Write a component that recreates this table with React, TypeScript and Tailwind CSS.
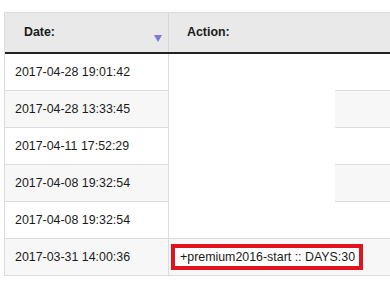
const rows = [
  { date: "2017-04-28 19:01:42", action: "" },
  { date: "2017-04-28 13:33:45", action: "" },
  { date: "2017-04-11 17:52:29", action: "" },
  { date: "2017-04-08 19:32:54", action: "" },
  { date: "2017-04-08 19:32:54", action: "" },
  { date: "2017-03-31 14:00:36", action: "+premium2016-start :: DAYS:30" },
];

export default function App() {
  return (
    <div className="relative h-[281px] w-[390px] overflow-hidden bg-white pt-[12px] pl-[4px] font-['Liberation_Sans',Arial,sans-serif] text-[12.4px] text-[#1a1a1a]">
      <div className="w-[420px] border-l border-t border-[#dcdcdc]">
        <div className="flex h-[41px] border-b-2 border-[#222] bg-[#e9e9e9] font-bold">
          <div className="relative flex w-[164px] shrink-0 items-center border-r border-[#d6d6d6] pl-[19px]">
            Date:
            <span className="absolute right-[6px] top-[22px] h-0 w-0 border-x-[4px] border-t-[7px] border-x-transparent border-t-[#7b7bd8]" />
          </div>
          <div className="flex flex-1 items-center pl-[18px]">Action:</div>
        </div>
        {rows.map((r, i) => (
          <div
            key={i}
            className={`flex h-[37px] border-b border-[#dcdcdc] ${i % 2 === 1 ? "bg-[#f7f7f7]" : "bg-white"}`}
          >
            <div className="flex w-[164px] shrink-0 items-center border-r border-[#dcdcdc] pl-[10px]">
              {r.date}
            </div>
            <div className="flex flex-1 items-center pl-[2px]">
              {r.action && (
                <span className="flex h-[26px] w-[192px] items-center border-[4px] border-[#e0141e] bg-white pl-[5px]">
                  {r.action}
                </span>
              )}
            </div>
          </div>
        ))}
      </div>
      <div className="absolute left-[169px] top-[54px] h-[184px] w-[166px] bg-white" />
    </div>
  );
}
